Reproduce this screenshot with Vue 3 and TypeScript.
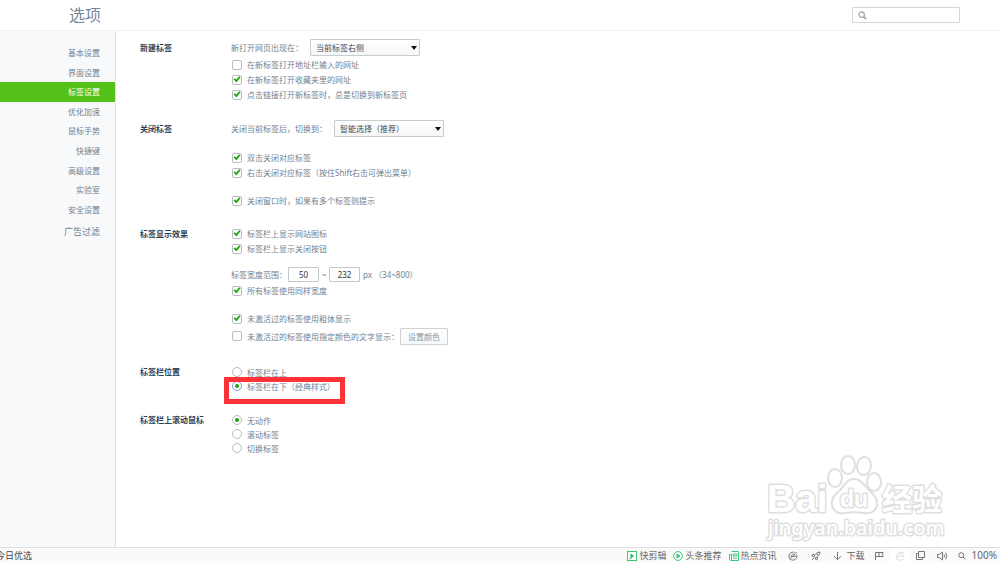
<script setup lang="ts">
import { ref } from 'vue'

const navItems: string[] = [
  '基本设置', '界面设置', '标签设置', '优化加速', '鼠标手势',
  '快捷键', '高级设置', '实验室', '安全设置',
]
const active = ref('标签设置')

const openIn = ref('当前标签右侧')
const closeTo = ref('智能选择（推荐）')
const openAddress = ref(false)
const openFavorite = ref(true)
const openLink = ref(true)
const closeDouble = ref(true)
const closeRight = ref(true)
const closeConfirm = ref(true)
const showIcon = ref(true)
const showClose = ref(true)
const minWidth = ref('50')
const maxWidth = ref('232')
const sameWidth = ref(true)
const boldInactive = ref(true)
const colorInactive = ref(false)
const barPosition = ref('bottom')
const wheelAction = ref('none')
const wheelOptions = [
  { value: 'none', label: '无动作' },
  { value: 'scroll', label: '滚动标签' },
  { value: 'switch', label: '切换标签' },
]
</script>

<template>
  <div class="page">
    <header class="top">
      <h1>选项</h1>
      <label class="search">
        <svg width="9" height="9" viewBox="0 0 9 9" fill="none" stroke="#aaa" stroke-width="1.3">
          <circle cx="3.7" cy="3.7" r="2.7" />
          <path d="M5.7 5.7L8 8" stroke-width="1.8" />
        </svg>
        <input type="search" aria-label="搜索" />
      </label>
    </header>

    <div class="body">
      <nav class="side">
        <div class="nav-list">
          <a
            v-for="item in navItems"
            :key="item"
            href="#"
            :class="{ active: item === active }"
            @click.prevent="active = item"
          >{{ item }}</a>
        </div>
        <a class="extra" href="#" @click.prevent>广告过滤</a>
      </nav>

      <main class="content">
        <section>
          <h2 class="tall">新建标签</h2>
          <div class="fields">
            <div class="row control">
              <label for="open-in">新打开网页出现在：</label>
              <span class="select">
                <select id="open-in" v-model="openIn">
                  <option>当前标签右侧</option>
                </select>
              </span>
            </div>
            <label class="row"><input v-model="openAddress" type="checkbox" />在新标签打开地址栏输入的网址</label>
            <label class="row"><input v-model="openFavorite" type="checkbox" />在新标签打开收藏夹里的网址</label>
            <label class="row"><input v-model="openLink" type="checkbox" />点击链接打开新标签时，总是切换到新标签页</label>
          </div>
        </section>

        <section>
          <h2 class="tall">关闭标签</h2>
          <div class="fields">
            <div class="row control spaced">
              <label for="close-to">关闭当前标签后，切换到：</label>
              <span class="select">
                <select id="close-to" v-model="closeTo">
                  <option>智能选择（推荐）</option>
                </select>
              </span>
            </div>
            <label class="row"><input v-model="closeDouble" type="checkbox" />双击关闭对应标签</label>
            <label class="row spaced"><input v-model="closeRight" type="checkbox" />右击关闭对应标签（按住Shift右击可弹出菜单）</label>
            <label class="row"><input v-model="closeConfirm" type="checkbox" />关闭窗口时，如果有多个标签则提示</label>
          </div>
        </section>

        <section>
          <h2>标签显示效果</h2>
          <div class="fields">
            <label class="row"><input v-model="showIcon" type="checkbox" />标签栏上显示网站图标</label>
            <label class="row"><input v-model="showClose" type="checkbox" />标签栏上显示关闭按钮</label>
            <div class="row range">
              <label for="min-width">标签宽度范围：</label>
              <input id="min-width" v-model="minWidth" type="text" />
              <span class="tilde">~</span>
              <input v-model="maxWidth" type="text" aria-label="最大宽度" />
              <span class="unit">px （34~800）</span>
            </div>
            <label class="row spaced"><input v-model="sameWidth" type="checkbox" />所有标签使用同样宽度</label>
            <label class="row"><input v-model="boldInactive" type="checkbox" />未激活过的标签使用粗体显示</label>
            <div class="row color">
              <label class="row"><input v-model="colorInactive" type="checkbox" />未激活过的标签使用指定颜色的文字显示：</label>
              <button type="button" class="btn">设置颜色</button>
            </div>
          </div>
        </section>

        <section>
          <h2>标签栏位置</h2>
          <div class="fields radios">
            <label class="row"><input v-model="barPosition" type="radio" name="position" value="top" />标签栏在上</label>
            <label class="row marked"><input v-model="barPosition" type="radio" name="position" value="bottom" />标签栏在下（经典样式）</label>
          </div>
        </section>

        <section>
          <h2>标签栏上滚动鼠标</h2>
          <div class="fields radios">
            <label v-for="o in wheelOptions" :key="o.value" class="row">
              <input v-model="wheelAction" type="radio" name="wheel" :value="o.value" />{{ o.label }}
            </label>
          </div>
        </section>

        <svg class="logo" width="190" height="92" viewBox="0 0 190 92">
          <g fill="#fff" stroke="#dfdfdf" stroke-width="2" stroke-linejoin="round">
            <g class="outlined">
              <text x="4" y="58" font-size="39" class="latin">Bai</text>
              <text x="119" y="56" font-size="30" class="cjk">经验</text>
              <text x="5" y="81" font-size="20" class="url">jingyan.baidu.com</text>
            </g>
            <g class="paw">
              <ellipse cx="72" cy="24" rx="7" ry="9" />
              <ellipse cx="85" cy="11" rx="7" ry="9" />
              <ellipse cx="101" cy="12" rx="7" ry="9" transform="rotate(8 101 12)" />
              <ellipse cx="111" cy="28" rx="7" ry="9" />
              <path d="M91 25C84 25 82 31 77 36C71 41 68 45 69 51C70 57 75 60 81 59C87 58 95 58 101 59C108 60 113 57 114 51C115 45 111 41 106 36C101 31 98 25 91 25Z" />
            </g>
            <g class="outlined">
              <text x="77" y="53" font-size="23" class="latin">du</text>
            </g>
          </g>
        </svg>
      </main>
    </div>

    <footer class="status">
      <a class="today" href="#" @click.prevent>今日优选</a>
      <div class="tools">
        <a class="link" href="#" @click.prevent>
          <svg width="10" height="10" viewBox="0 0 10 10" fill="none" stroke="#3fc876"><rect x=".5" y=".5" width="9" height="9" /><path d="M3.5 2.6L7 5L3.5 7.4Z" fill="#20b45c" stroke="none" /><path d="M2.5 8L5 6.5" /></svg>快剪辑
        </a>
        <a class="link" href="#" @click.prevent>
          <svg width="10" height="10" viewBox="0 0 10 10" fill="none" stroke="#3fc876"><circle cx="5" cy="5" r="4.4" /><path d="M4 3L7 5L4 7Z" fill="#3fc876" /></svg>头条推荐
        </a>
        <a class="link" href="#" @click.prevent>
          <svg width="10" height="10" viewBox="0 0 10 10" fill="none" stroke="#3fc876"><path d="M2.5 .5H9.5V9.5H1.5L.5 8.5V3.5H2.5V9" /><path d="M4.2 3H7.8V5H4.2ZM4 7.2H8" /></svg>热点资讯
        </a>
        <button type="button" class="tool first" aria-label="加速">
          <svg width="10" height="10" viewBox="0 0 10 10" fill="none" stroke="#777"><path d="M8.6 3.5A4 4 0 1 1 6.4 1.4" /><path d="M3 5.6H7.5M3 5.6C3 2.5 7 2.6 7 5.4M1.5 8.5C4 6 6 3 9 1" stroke-width=".9" /></svg>
        </button>
        <button type="button" class="tool rocket" aria-label="火箭">
          <svg width="10" height="10" viewBox="0 0 10 10" fill="none" stroke="#777"><path d="M3 5.5C4 3 6 1.2 9 1C8.8 4 7 6 4.5 7ZM3.6 3.4H1.5L1 5.2L3 5.5M6.6 6.2V8L5 9L4.5 7M1 9L3 7" /><circle cx="6.5" cy="3.5" r=".5" /></svg>
        </button>
        <button type="button" class="tool download">
          <svg width="9" height="10" viewBox="0 0 9 10" fill="none" stroke="#777"><path d="M4.5 1V8.6M1 5.2L4.5 8.7L8 5.2" /></svg>下载
        </button>
        <button type="button" class="tool flag" aria-label="标记">
          <svg width="10" height="10" viewBox="0 0 10 10" fill="none" stroke="#777"><path d="M1.5 9V1.5H5V5.5H1.5M5 1.5H9.2L8.2 3.5L9.2 5.5H5" /></svg>
        </button>
        <button type="button" class="tool browser" aria-label="内核">
          <svg width="10" height="10" viewBox="0 0 10 10" fill="none" stroke="#ddd"><path d="M8.5 7A3.8 3.8 0 1 1 8.8 5.3H3M2 8.8C0 8 5 1.5 9 1" /></svg>
        </button>
        <button type="button" class="tool" aria-label="窗口">
          <svg width="9" height="9" viewBox="0 0 9 9" fill="none" stroke="#777"><path d="M2.5 .5H8.5V6.5H2.5ZM2.5 2.5H.5V8.5H6.5V6.5" /></svg>
        </button>
        <button type="button" class="tool" aria-label="声音">
          <svg width="11" height="10" viewBox="0 0 11 10" fill="none" stroke="#777"><path d="M.6 3.4H2.4L5.4 1V9L2.4 6.6H.6ZM7 3.4Q8 5 7 6.6M8.6 1.6Q11 5 8.6 8.4" /></svg>
        </button>
        <button type="button" class="tool zoom">
          <svg width="8" height="8" viewBox="0 0 8 8" fill="none" stroke="#777"><circle cx="3.2" cy="3.2" r="2.5" /><path d="M5 5L7.4 7.4" /></svg>100%
        </button>
      </div>
    </footer>
  </div>
</template>

<style>
body {
  margin: 0;
}
</style>

<style scoped>
.page {
  display: flex;
  flex-direction: column;
  min-height: 100vh;
  background: #fff;
  color: #718191;
  font-family: "Noto Sans", "Noto Sans CJK SC", sans-serif;
  font-size: 8px;
  overflow: hidden;
}
.page *,
.page *::before,
.page *::after {
  box-sizing: border-box;
}
a {
  color: inherit;
  text-decoration: none;
}
button, input, select {
  font: inherit;
  color: inherit;
  margin: 0;
}
svg {
  flex: none;
}
.top {
  display: flex;
  align-items: center;
  justify-content: space-between;
  height: 31px;
  padding: 0 40px 0 69px;
  border-bottom: 1px solid #f0f1f2;
}
h1 {
  margin: 0;
  font-size: 16px;
  font-weight: 400;
  line-height: 30px;
  color: #75889a;
}
.search {
  display: flex;
  align-items: center;
  gap: 4px;
  width: 108px;
  height: 16px;
  padding: 0 5px;
  border: 1px solid #d5d5d5;
  border-radius: 1px;
}
.search input {
  flex: 1;
  min-width: 0;
  padding: 0;
  border: 0;
  outline: 0;
  background: none;
}
.body {
  display: flex;
  flex: 1;
}
.side {
  width: 116px;
  padding-top: 12px;
  border-right: 1px solid #dfe3e6;
  background: #f8f9fb;
}
.nav-list {
  display: grid;
  grid-template-rows: repeat(9, 1fr);
  height: 176px;
}
.side a {
  display: flex;
  align-items: center;
  justify-content: flex-end;
  padding-right: 15px;
}
.side a.active {
  background: #54c01a;
  color: #fff;
}
.side .extra {
  height: 25px;
  font-size: 9px;
}
.content {
  position: relative;
  display: flex;
  flex: 1;
  flex-direction: column;
  gap: 18px;
  padding: 8px 24px 40px;
}
section {
  display: grid;
  grid-template-columns: 91px 1fr;
}
h2 {
  margin: 0;
  font-size: 8px;
  font-weight: 700;
  line-height: 15px;
  color: #2f4254;
}
h2.tall {
  line-height: 17px;
}
.fields {
  display: flex;
  flex-direction: column;
  align-items: flex-start;
}
.row {
  display: flex;
  align-items: center;
  height: 15px;
  white-space: nowrap;
}
.row.control {
  height: 17px;
  margin-bottom: 1px;
}
.row.spaced {
  margin-bottom: 13px;
}
.row.range {
  height: 17px;
  margin-top: 10px;
}
.row.color {
  height: 20px;
}
.radios {
  padding: 1px 0;
}
.radios .row {
  height: 14px;
}
input[type="checkbox"],
input[type="radio"] {
  display: grid;
  place-items: center;
  appearance: none;
  width: 10px;
  height: 10px;
  margin: 0 5px 0 1px;
  border: 1px solid #b9bcbf;
  border-radius: 2px;
  background: #fff;
}
input[type="radio"] {
  border-radius: 50%;
}
input[type="checkbox"]:checked::before {
  content: "";
  width: 8px;
  height: 8px;
  background: #22a012;
  clip-path: polygon(6% 48%, 24% 34%, 40% 54%, 76% 8%, 94% 22%, 42% 88%);
}
input[type="radio"]:checked::before {
  content: "";
  width: 4px;
  height: 4px;
  border-radius: 50%;
  background: #22a012;
}
.select {
  position: relative;
  margin-left: 7px;
}
.select::after {
  content: "";
  position: absolute;
  top: 7px;
  right: 3px;
  border: 3px solid transparent;
  border-top: 4px solid #111;
  border-bottom: 0;
  pointer-events: none;
}
select {
  display: block;
  appearance: none;
  width: 110px;
  height: 17px;
  padding: 0 5px;
  border: 1px solid #c9cccf;
  border-radius: 1px;
  background: linear-gradient(#fff, #f5f6f7);
  color: #3c4b5a;
}
.range input {
  width: 31px;
  height: 15px;
  padding: 0;
  border: 1px solid #c3c6c9;
  border-radius: 1px;
  text-align: center;
  color: #333;
}
.range label {
  margin-right: 1px;
}
.tilde {
  width: 10px;
  text-align: center;
}
.unit {
  margin-left: 3px;
}
.btn {
  width: 48px;
  height: 17px;
  margin-left: 1px;
  padding: 0;
  border: 1px solid #cfd2d5;
  border-radius: 1px;
  background: linear-gradient(#fff, #f6f7f8);
  color: #8896a4;
}
.marked {
  position: relative;
}
.marked input {
  border-color: #7f9ce0;
}
.marked::after {
  content: "";
  position: absolute;
  top: -2px;
  left: -7px;
  width: 121px;
  height: 27px;
  border: 5px solid #fd3236;
  pointer-events: none;
}
.logo {
  position: absolute;
  right: 47px;
  bottom: 1px;
}
.outlined {
  paint-order: stroke;
  stroke-width: 3px;
}
.latin {
  font-family: "Liberation Sans", sans-serif;
  font-weight: 700;
}
.cjk {
  font-family: "Noto Sans CJK SC", sans-serif;
  font-weight: 700;
}
.url {
  font-family: "Noto Sans", sans-serif;
  font-weight: 500;
}
.status {
  display: flex;
  align-items: center;
  justify-content: space-between;
  height: 16px;
  border-top: 1px solid #dedede;
  background: #fafafa;
  color: #666;
  font-size: 9px;
  line-height: 15px;
}
.today {
  margin-left: -4px;
  color: #444;
}
.tools {
  display: flex;
  align-items: center;
  padding-right: 3px;
}
.link {
  display: flex;
  align-items: center;
  gap: 2px;
  margin-right: 7px;
}
.tool {
  display: flex;
  align-items: center;
  justify-content: center;
  width: 22px;
  height: 15px;
  padding: 0;
  border: 0;
  background: none;
}
.tool.first {
  width: 18px;
}
.tool.rocket {
  width: 28px;
}
.tool.download {
  width: 38px;
  gap: 5px;
}
.tool.browser {
  width: 20px;
  background: #fff;
}
.tool.zoom {
  width: auto;
  gap: 6px;
  margin-left: 4px;
  font-size: 10px;
}
</style>
